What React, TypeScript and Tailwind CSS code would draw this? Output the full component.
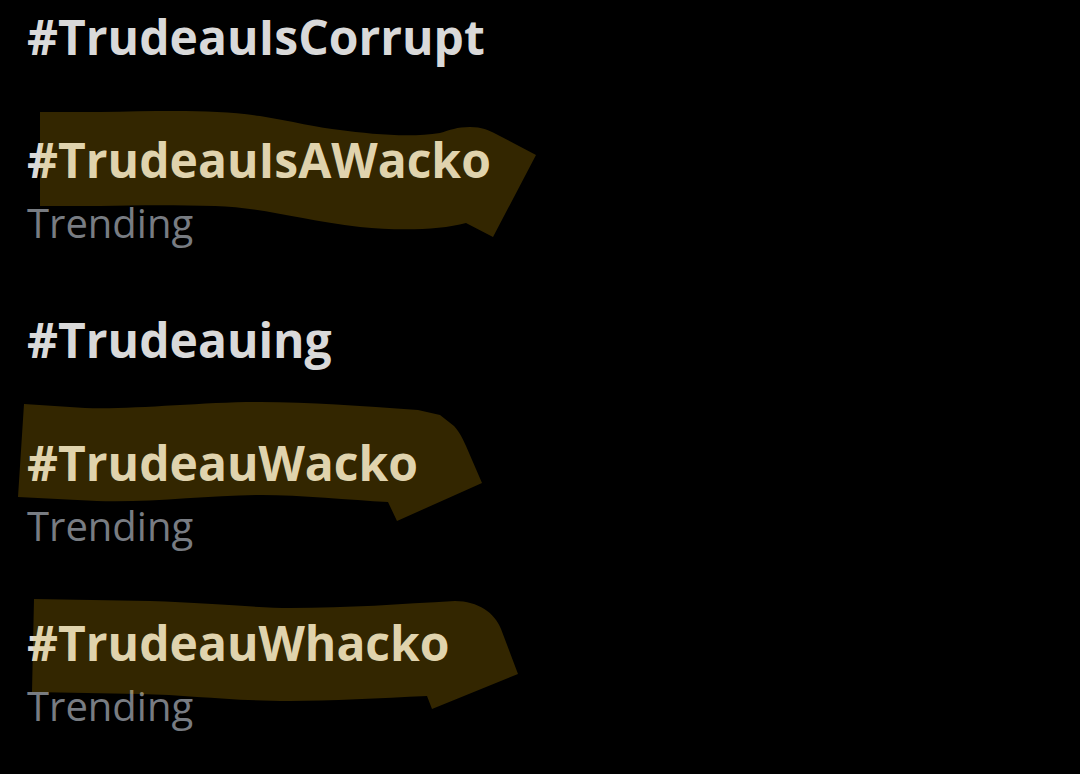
type Trend = {
  tag: string;
  trending?: boolean;
  marker?: string;
};

const trends: Trend[] = [
  { tag: "#TrudeauIsCorrupt" },
  {
    tag: "#TrudeauIsAWacko",
    trending: true,
    marker:
      "M40 18 L100 18 C160 17 215 15 260 22 C290 27 320 34 340 36 C370 40 410 44 440 39 C450 36 457 33 470 33 C482 33 488 36 496 40 L536 61 L493 143 L466 129 C440 136 400 137 360 133 C300 126 260 113 215 112 C180 111 140 111 100 112 L40 112 Z",
  },
  { tag: "#Trudeauing" },
  {
    tag: "#TrudeauWacko",
    trending: true,
    marker:
      "M24 7 L85 11 C130 13 200 5 260 5 C310 5 360 9 418 13 L440 18 L454 29 C460 36 463 42 466 49 L482 86 L397 124 L388 105 C350 103 300 98 262 98 C210 98 150 106 97 104 L18 100 Z",
  },
  {
    tag: "#TrudeauWhacko",
    trending: true,
    marker:
      "M34 22 L150 24 C210 26 260 31 290 31 C350 31 400 27 455 24 C478 24 495 36 501 52 L518 97 L432 132 L427 119 C380 121 330 124 290 124 C230 124 190 118 140 117 L32 115 Z",
  },
];

const Marker = ({ path }: { path: string }) => (
  <svg
    aria-hidden="true"
    viewBox="0 0 540 144"
    className="absolute left-0 -top-8 w-[540px] h-36 pointer-events-none"
  >
    <path d={path} fill="#ffbf00" fillOpacity="0.2" />
  </svg>
);

const TrendItem = ({ tag, trending, marker }: Trend) => (
  <li className="relative px-[27px]">
    <h2 className="text-[48px] leading-[68px] font-bold text-[#d9d9d9]">
      {tag}
    </h2>
    {trending && (
      <p className="text-[40px] leading-[57px] text-[#787c82]">Trending</p>
    )}
    {marker && <Marker path={marker} />}
  </li>
);

const App = () => {
  return (
    <main className="min-h-screen bg-black font-['Open_Sans',sans-serif]">
      <ul className="flex flex-col gap-[55px] pt-[3px]">
        {trends.map((trend) => (
          <TrendItem key={trend.tag} {...trend} />
        ))}
      </ul>
    </main>
  );
};

export default App;
